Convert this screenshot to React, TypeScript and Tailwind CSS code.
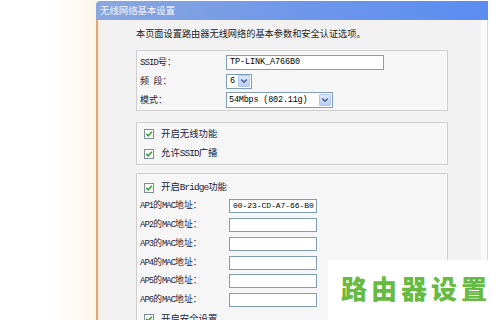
import React from "react";

function Mix({ text }: { text: string }) {
  const parts = text.match(/[\x00-\x7f]+|[^\x00-\x7f]+/g) || [];
  return (
    <>
      {parts.map((p, i) =>
        /[\x00-\x7f]/.test(p[0]) ? (
          <span key={i} className="font-['Liberation_Mono',monospace] tracking-[-0.9px] whitespace-pre">
            {p}
          </span>
        ) : (
          <span key={i}>{p}</span>
        )
      )}
    </>
  );
}

function Check() {
  return (
    <div className="w-[10px] h-[10px] border border-[#7d8d9b] bg-white flex items-center justify-center shrink-0">
      <svg width="8" height="8" viewBox="0 0 8 8">
        <path d="M1.2 3.8 L3.2 5.9 L6.9 1.8" stroke="#3a9e35" strokeWidth="1.6" fill="none" />
      </svg>
    </div>
  );
}

function DropBtn() {
  return (
    <div className="w-[12px] h-[12px] mr-[1px] bg-gradient-to-b from-[#dde8fd] to-[#b9cdf7] border border-[#b2c6f2] rounded-[1px] flex items-center justify-center">
      <svg width="8" height="6" viewBox="0 0 8 6">
        <path d="M1.2 1.5 L4 4.3 L6.8 1.5" stroke="#4d6185" strokeWidth="1.5" fill="none" />
      </svg>
    </div>
  );
}

function Row({ children }: { children: React.ReactNode }) {
  return <div className="h-[18.75px] flex items-center shrink-0">{children}</div>;
}

function CheckRow({ label, h }: { label: string; h: string }) {
  return (
    <div className={`${h} flex items-center shrink-0 pl-[7px] gap-[7px] text-[9.4px] text-[#1d2238]`}>
      <Check />
      <span className="leading-none">
        <Mix text={label} />
      </span>
    </div>
  );
}

export default function App() {
  const macs = ["00-23-CD-A7-66-B0", "", "", "", "", ""];
  return (
    <div className="w-[500px] h-[320px] bg-white relative overflow-hidden flex font-['Noto_Sans_CJK_SC',sans-serif]">
      <div className="w-[96px] h-full shrink-0 bg-gradient-to-r from-white via-white to-[#fbf6ec]" />
      <div className="w-[392px] h-full shrink-0 flex flex-col overflow-hidden">
        <div className="h-[19px] shrink-0 mt-[1px] rounded-tl-[4px] bg-gradient-to-r from-[#8aa7de] via-[#6f98ea] to-[#5b8cf1] flex items-center pl-[4px] text-[9.4px] text-[#f3f6ff] leading-none">
          无线网络基本设置
        </div>
        <div className="flex-1 min-h-0 flex">
          <div className="w-[1.5px] bg-[#dcaa76]" />
          <div className="w-[3.5px] bg-[#f9eedf]" />
          <div className="flex-1 bg-[#f2f2f2] pl-[35px] pt-[7px] overflow-hidden">
            <div className="h-[12px] leading-[12px] text-[9.2px] text-[#1e1e1e]">
              本页面设置路由器无线网络的基本参数和安全认证选项。
            </div>
            <div className="mt-[11px] w-[312px] border border-[#cfcfcf] bg-[#f6f6f6] pl-[3px] pt-[2px] pb-[1px] text-[9px] text-[#1d2238]">
              <Row>
                <span className="w-[86px] leading-none"><Mix text="SSID号：" /></span>
                <div className="w-[158px] h-[15px] border border-[#7f9db9] bg-white flex items-center pl-[3px] font-['Liberation_Mono',monospace] text-[8.5px] tracking-[-0.1px] text-black">
                  TP-LINK_A766B0
                </div>
              </Row>
              <Row>
                <span className="w-[86px] leading-none"><Mix text="频 段：" /></span>
                <div className="w-[26px] h-[15px] border border-[#7f9db9] bg-white flex items-center justify-between pl-[3px] font-['Liberation_Mono',monospace] text-[8.5px] text-black">
                  6
                  <DropBtn />
                </div>
              </Row>
              <Row>
                <span className="w-[86px] leading-none"><Mix text="模式：" /></span>
                <div className="w-[107px] h-[16px] border border-[#7f9db9] bg-white flex items-center justify-between pl-[2px] font-['Liberation_Mono',monospace] text-[8.5px] tracking-[-0.2px] text-black whitespace-pre">
                  54Mbps (802.11g)
                  <DropBtn />
                </div>
              </Row>
            </div>
            <div className="mt-[11px] w-[312px] border border-[#cfcfcf] bg-[#f6f6f6] pt-[1px] pb-[1px]">
              <CheckRow label="开启无线功能" h="h-[19.5px]" />
              <CheckRow label="允许SSID广播" h="h-[19.5px]" />
            </div>
            <div className="mt-[8px] w-[312px] border border-[#cfcfcf] bg-[#f6f6f6] pt-[4px] pb-[4px] text-[#1d2238]">
              <CheckRow label="开启Bridge功能" h="h-[18.75px]" />
              {macs.map((m, i) => (
                <div key={i} className="h-[18.75px] shrink-0 flex items-center pl-[3px] text-[8.8px]">
                  <span className="w-[89px] leading-none"><Mix text={`AP${i + 1}的MAC地址：`} /></span>
                  <div className="w-[88px] h-[14px] border border-[#7f9db9] bg-white flex items-center pl-[3px] font-['Liberation_Mono',monospace] text-[8px] tracking-[-0.05px] text-black">
                    {m}
                  </div>
                </div>
              ))}
              <CheckRow label="开启安全设置" h="h-[18.75px]" />
            </div>
          </div>
          <div className="w-[6px] bg-[#fafafa]" />
          <div className="w-[1px] bg-[#e2dab4]" />
        </div>
      </div>
      <div className="w-[12px] h-full shrink-0 bg-white" />
      <div className="absolute left-[328px] top-[260px] w-[172px] h-[60px] bg-white flex items-start justify-center pt-[13px]">
        <span className="text-[26px] leading-[30px] font-black tracking-[4px] text-[#67bb42] pl-[4px]">
          路由器设置
        </span>
      </div>
    </div>
  );
}
